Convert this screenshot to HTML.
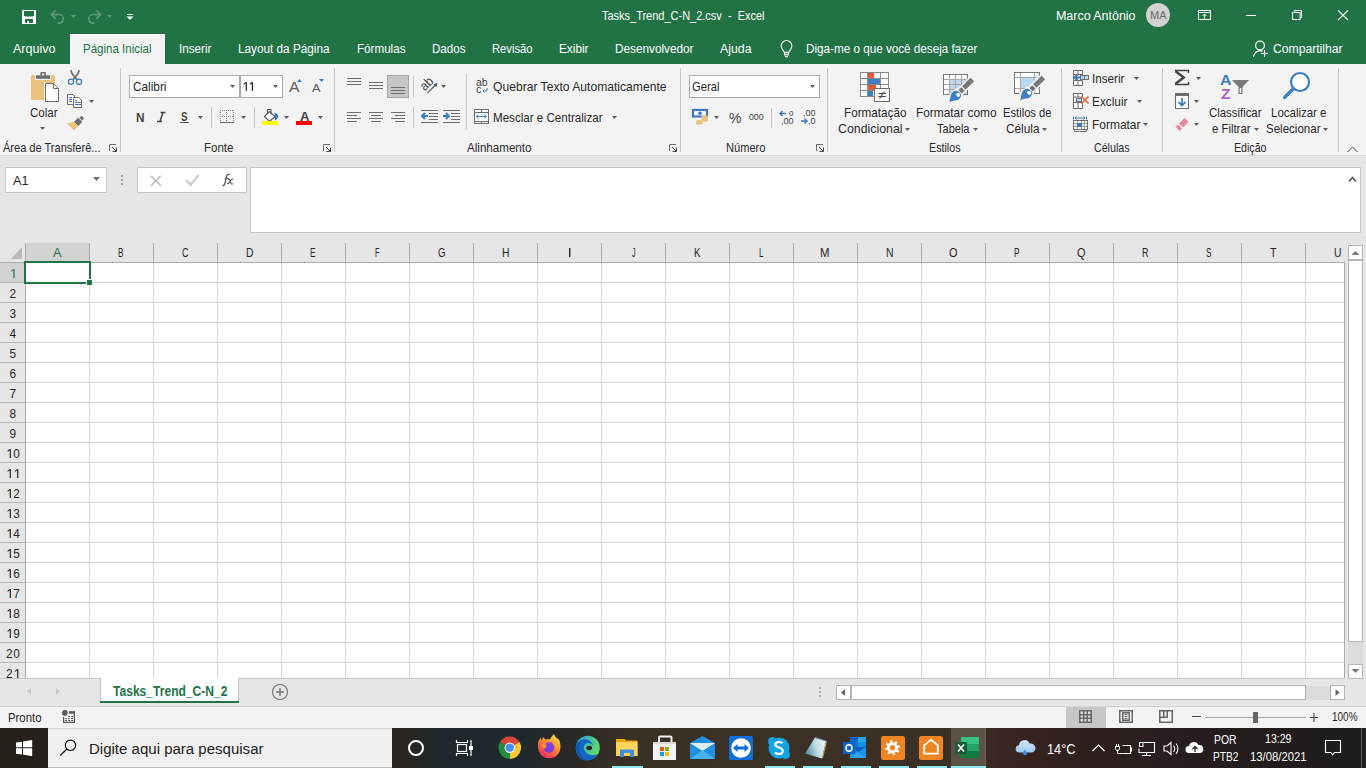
<!DOCTYPE html>
<html><head><meta charset="utf-8"><title>Excel</title>
<style>html,body{margin:0;padding:0;width:1366px;height:768px;overflow:hidden;background:#e6e6e6}
svg{position:absolute;left:0;top:0;display:block}
text{font-family:"Liberation Sans",sans-serif;white-space:pre}</style></head>
<body><svg width="1366" height="768" viewBox="0 0 1366 768">
<rect x="0" y="0" width="1366" height="64" fill="#217346" />
<rect x="0" y="64" width="1366" height="92" fill="#f3f3f3" />
<rect x="0" y="155" width="1366" height="1" fill="#dadada" />
<rect x="0" y="156" width="1366" height="572" fill="#e6e6e6" />
<rect x="22" y="10" width="14" height="14" fill="#fff" />
<path d="M24 11h10v4.6l-1 1h-8l-1-1z" fill="#217346"/>
<rect x="25" y="19" width="8" height="4" fill="#217346" />
<rect x="27" y="21" width="2" height="2" fill="#fff" />
<path d="M51.5 14.5 h7.5 a4.3 4.3 0 0 1 0 8.6 h-1.5" fill="none" stroke="#5f9a78" stroke-width="1.7"/>
<path d="M55.5 10.5 l-4 4 4 4" fill="none" stroke="#5f9a78" stroke-width="1.7"/>
<path d="M71 15h5l-2.5 3z" fill="#5f9a78"/>
<path d="M100.5 14.5 h-7.5 a4.3 4.3 0 0 0 0 8.6 h1.5" fill="none" stroke="#5f9a78" stroke-width="1.7"/>
<path d="M96.5 10.5 l4 4 -4 4" fill="none" stroke="#5f9a78" stroke-width="1.7"/>
<path d="M107 15h5l-2.5 3z" fill="#5f9a78"/>
<rect x="127" y="14" width="6" height="1" fill="#fff" />
<path d="M126.5 16.5h7l-3.5 3.5z" fill="#fff"/>
<text x="602" y="20" font-size="13" fill="#fff" font-weight="normal" textLength="162.5" lengthAdjust="spacingAndGlyphs" font-family="Liberation Sans" >Tasks_Trend_C-N_2.csv  -  Excel</text>
<text x="1056" y="20" font-size="13" fill="#fff" font-weight="normal" textLength="79.5" lengthAdjust="spacingAndGlyphs" font-family="Liberation Sans" >Marco Antônio</text>
<circle cx="1158" cy="15" r="12" fill="#d2d2d2"/>
<text x="1150" y="19" font-size="11" fill="#6b6b6b" font-weight="normal" textLength="16.5" lengthAdjust="spacingAndGlyphs" font-family="Liberation Sans" >MA</text>
<rect x="1198.5" y="10.5" width="12" height="9" fill="none" stroke="#fff" stroke-width="1"/>
<rect x="1199" y="12" width="12" height="1" fill="#fff" />
<path d="M1204.5 19.5v-5.5 M1202.5 16l2-2 2 2" fill="none" stroke="#fff" stroke-width="1"/>
<rect x="1246" y="15" width="10" height="1" fill="#fff" />
<rect x="1292.5" y="12.5" width="7.5" height="7" fill="none" stroke="#fff"/>
<path d="M1294.5 12v-1.5h7v7h-1.5" fill="none" stroke="#fff"/>
<path d="M1338 10.3l10 9.7 M1348 10.3l-10 9.7" stroke="#fff" stroke-width="1.1"/>
<rect x="69" y="33" width="97" height="31" fill="#1d6b40" />
<rect x="70" y="34" width="95" height="30" fill="#ffffff" />
<rect x="71" y="35" width="93" height="29" fill="#f3f3f3" />
<text x="13" y="53" font-size="13" fill="#fff" font-weight="normal" textLength="42.5" lengthAdjust="spacingAndGlyphs" font-family="Liberation Sans" >Arquivo</text>
<text x="83" y="53" font-size="13" fill="#217346" font-weight="normal" textLength="68.5" lengthAdjust="spacingAndGlyphs" font-family="Liberation Sans" >Página Inicial</text>
<text x="179" y="53" font-size="13" fill="#fff" font-weight="normal" textLength="32.5" lengthAdjust="spacingAndGlyphs" font-family="Liberation Sans" >Inserir</text>
<text x="238" y="53" font-size="13" fill="#fff" font-weight="normal" textLength="91.5" lengthAdjust="spacingAndGlyphs" font-family="Liberation Sans" >Layout da Página</text>
<text x="357" y="53" font-size="13" fill="#fff" font-weight="normal" textLength="48.5" lengthAdjust="spacingAndGlyphs" font-family="Liberation Sans" >Fórmulas</text>
<text x="432" y="53" font-size="13" fill="#fff" font-weight="normal" textLength="33.5" lengthAdjust="spacingAndGlyphs" font-family="Liberation Sans" >Dados</text>
<text x="492" y="53" font-size="13" fill="#fff" font-weight="normal" textLength="40.5" lengthAdjust="spacingAndGlyphs" font-family="Liberation Sans" >Revisão</text>
<text x="559" y="53" font-size="13" fill="#fff" font-weight="normal" textLength="29.5" lengthAdjust="spacingAndGlyphs" font-family="Liberation Sans" >Exibir</text>
<text x="615" y="53" font-size="13" fill="#fff" font-weight="normal" textLength="78.5" lengthAdjust="spacingAndGlyphs" font-family="Liberation Sans" >Desenvolvedor</text>
<text x="720" y="53" font-size="13" fill="#fff" font-weight="normal" textLength="31.5" lengthAdjust="spacingAndGlyphs" font-family="Liberation Sans" >Ajuda</text>
<path d="M784.3 52.3L782.2 49A5.3 5.3 0 1 1 790.8 49L788.7 52.3z" fill="none" stroke="#fff" stroke-width="1.2"/>
<rect x="784.6" y="52.6" width="3.9" height="2.2" fill="none" stroke="#fff" stroke-width="1.2"/>
<rect x="785" y="56" width="3" height="1.2" fill="#fff" />
<text x="806" y="53" font-size="13" fill="#fff" font-weight="normal" textLength="171.5" lengthAdjust="spacingAndGlyphs" font-family="Liberation Sans" >Diga-me o que você deseja fazer</text>
<circle cx="1260" cy="45.5" r="4.4" fill="none" stroke="#fff" stroke-width="1.2"/>
<path d="M1253.5 57 C1253.8 53.5 1256.5 50.6 1260 50.6 C1261 50.6 1262 50.8 1262.5 51.2" fill="none" stroke="#fff" stroke-width="1.2"/>
<path d="M1264.5 50v7 M1261 53.5h7" stroke="#fff" stroke-width="1.1"/>
<text x="1273" y="53" font-size="13" fill="#fff" font-weight="normal" textLength="69.5" lengthAdjust="spacingAndGlyphs" font-family="Liberation Sans" >Compartilhar</text>
<rect x="120" y="68" width="1" height="84" fill="#c8c8c8" />
<rect x="334" y="68" width="1" height="84" fill="#c8c8c8" />
<rect x="680" y="68" width="1" height="84" fill="#c8c8c8" />
<rect x="827" y="68" width="1" height="84" fill="#c8c8c8" />
<rect x="1061" y="68" width="1" height="84" fill="#c8c8c8" />
<rect x="1162" y="68" width="1" height="84" fill="#c8c8c8" />
<rect x="1338" y="68" width="1" height="84" fill="#c8c8c8" />
<text x="3" y="152" font-size="12.2" fill="#2a2a2a" font-weight="normal" textLength="97.5" lengthAdjust="spacingAndGlyphs" font-family="Liberation Sans" >Área de Transferê...</text>
<text x="204" y="152" font-size="12.2" fill="#2a2a2a" font-weight="normal" textLength="29.5" lengthAdjust="spacingAndGlyphs" font-family="Liberation Sans" >Fonte</text>
<text x="467" y="152" font-size="12.2" fill="#2a2a2a" font-weight="normal" textLength="64.5" lengthAdjust="spacingAndGlyphs" font-family="Liberation Sans" >Alinhamento</text>
<text x="726" y="152" font-size="12.2" fill="#2a2a2a" font-weight="normal" textLength="39.5" lengthAdjust="spacingAndGlyphs" font-family="Liberation Sans" >Número</text>
<text x="929" y="152" font-size="12.2" fill="#2a2a2a" font-weight="normal" textLength="31.5" lengthAdjust="spacingAndGlyphs" font-family="Liberation Sans" >Estilos</text>
<text x="1094" y="152" font-size="12.2" fill="#2a2a2a" font-weight="normal" textLength="35.5" lengthAdjust="spacingAndGlyphs" font-family="Liberation Sans" >Células</text>
<text x="1234" y="152" font-size="12.2" fill="#2a2a2a" font-weight="normal" textLength="32.5" lengthAdjust="spacingAndGlyphs" font-family="Liberation Sans" >Edição</text>
<path d="M109.5 151v-6.5h6.5" fill="none" stroke="#6b6b6b" stroke-width="1"/>
<path d="M112 147l4 4 M116.5 147.5v4h-4" fill="none" stroke="#444" stroke-width="1"/>
<path d="M323.5 151v-6.5h6.5" fill="none" stroke="#6b6b6b" stroke-width="1"/>
<path d="M326 147l4 4 M330.5 147.5v4h-4" fill="none" stroke="#444" stroke-width="1"/>
<path d="M669.5 151v-6.5h6.5" fill="none" stroke="#6b6b6b" stroke-width="1"/>
<path d="M672 147l4 4 M676.5 147.5v4h-4" fill="none" stroke="#444" stroke-width="1"/>
<path d="M816.5 151v-6.5h6.5" fill="none" stroke="#6b6b6b" stroke-width="1"/>
<path d="M819 147l4 4 M823.5 147.5v4h-4" fill="none" stroke="#444" stroke-width="1"/>
<path d="M1347.5 152l5-5 5 5" fill="none" stroke="#444" stroke-width="1"/>
<rect x="31" y="75" width="24" height="25" rx="1.5" fill="#eac27c"/>
<rect x="35" y="74" width="16" height="6" fill="#f3f3f3" />
<path d="M36 75.3h14v3.5h-14z" fill="#6d6d6d"/>
<rect x="40.3" y="72" width="5.6" height="4" rx="1" fill="#6d6d6d"/>
<rect x="42" y="73.5" width="2.2" height="2" fill="#f3f3f3" />
<rect x="44" y="82" width="2" height="20" fill="#f3f3f3" />
<path d="M45.5 83.5h8l5 5v13h-13z" fill="#fff" stroke="#6d6d6d" stroke-width="1"/>
<path d="M53.5 83.5v5h5" fill="none" stroke="#6d6d6d" stroke-width="1"/>
<text x="30" y="117" font-size="12.2" fill="#2a2a2a" font-weight="normal" textLength="27.5" lengthAdjust="spacingAndGlyphs" font-family="Liberation Sans" >Colar</text>
<path d="M40 127h5l-2.5 3z" fill="#5b5b5b"/>
<path d="M70.8 70.2C71.5 73.5 73.5 76 76.8 79.6 M79.2 70.2C78.5 73.5 76.5 76 73.2 79.6" fill="none" stroke="#6d6d6d" stroke-width="1.7"/>
<circle cx="71" cy="81.8" r="2.6" fill="none" stroke="#3c78c0" stroke-width="1.2"/>
<circle cx="79" cy="81.8" r="2.6" fill="none" stroke="#3c78c0" stroke-width="1.2"/>
<path d="M67.5 94.5h5.5l1.5 1.5v8.5h-7z" fill="#fff" stroke="#6d6d6d"/>
<path d="M73.5 97.5h5.5l2.5 2.5v7.5h-8z" fill="#fff" stroke="#6d6d6d"/>
<rect x="69" y="97" width="3" height="1" fill="#3c78c0" />
<rect x="69" y="99" width="3" height="1" fill="#3c78c0" />
<rect x="69" y="101" width="3" height="1" fill="#3c78c0" />
<rect x="75" y="100" width="2" height="1" fill="#3c78c0" />
<rect x="75" y="102" width="6" height="1" fill="#3c78c0" />
<rect x="75" y="104" width="6" height="1" fill="#3c78c0" />
<path d="M89 100h5l-2.5 3z" fill="#5b5b5b"/>
<g transform="translate(82.8 117.2) rotate(135)"><path d="M0 -1.9h2.8v3.8h-2.8z" fill="#6d6d6d"/><path d="M3.6 -2.9h5.9v5.8h-5.9z" fill="#6d6d6d"/><path d="M9.5 -2.9L15.6 -3L15.6 6.6L9.5 2.9z" fill="#eac27c"/></g>
<rect x="129" y="75" width="111" height="23" fill="#ababab" />
<rect x="130" y="76" width="109" height="21" fill="#fff" />
<rect x="240" y="75" width="43" height="23" fill="#ababab" />
<rect x="241" y="76" width="41" height="21" fill="#fff" />
<text x="133" y="91" font-size="13" fill="#262626" font-weight="normal" textLength="33.5" lengthAdjust="spacingAndGlyphs" font-family="Liberation Sans" >Calibri</text>
<path d="M230 85h5l-2.5 3z" fill="#5b5b5b"/>
<path d="M246.30 91V82.3" fill="none" stroke="#262626" stroke-width="1.2"/>
<path d="M246.80 82L245.70 82L243.30 83.9L243.80 84.7L245.70 83.5z" fill="#262626"/>
<path d="M252.40 91V82.3" fill="none" stroke="#262626" stroke-width="1.2"/>
<path d="M252.90 82L251.80 82L249.40 83.9L249.90 84.7L251.80 83.5z" fill="#262626"/>
<path d="M273 85h5l-2.5 3z" fill="#5b5b5b"/>
<text x="289" y="92" font-size="14" fill="#5b5b5b" font-weight="normal" textLength="10.5" lengthAdjust="spacingAndGlyphs" font-family="Liberation Sans" >A</text>
<path d="M297 82l2.5-3 2.5 3z" fill="#3c78c0"/>
<text x="312" y="92" font-size="11.5" fill="#5b5b5b" font-weight="normal" textLength="8.5" lengthAdjust="spacingAndGlyphs" font-family="Liberation Sans" >A</text>
<path d="M319 79h5l-2.5 3z" fill="#3c78c0"/>
<text x="136" y="122" font-size="12.5" fill="#444" font-weight="bold" textLength="8.5" lengthAdjust="spacingAndGlyphs" font-family="Liberation Sans" >N</text>
<path d="M160.5 112.5h5 M157 121.5h5 M163 112.5l-3 9" fill="none" stroke="#444" stroke-width="1.5"/>
<text x="181" y="121" font-size="12.5" fill="#444" font-weight="bold" textLength="6.5" lengthAdjust="spacingAndGlyphs" font-family="Liberation Sans" >S</text>
<rect x="180" y="122" width="9" height="1" fill="#555" />
<path d="M198 116h5l-2.5 3z" fill="#5b5b5b"/>
<rect x="211" y="107" width="1" height="21" fill="#c8c8c8" />
<rect x="220" y="110" width="1" height="1" fill="#888" />
<rect x="220" y="116" width="1" height="1" fill="#888" />
<rect x="220" y="110" width="1" height="1" fill="#888" />
<rect x="233" y="110" width="1" height="1" fill="#888" />
<rect x="226" y="110" width="1" height="1" fill="#888" />
<rect x="222" y="110" width="1" height="1" fill="#888" />
<rect x="222" y="116" width="1" height="1" fill="#888" />
<rect x="220" y="112" width="1" height="1" fill="#888" />
<rect x="233" y="112" width="1" height="1" fill="#888" />
<rect x="226" y="112" width="1" height="1" fill="#888" />
<rect x="224" y="110" width="1" height="1" fill="#888" />
<rect x="224" y="116" width="1" height="1" fill="#888" />
<rect x="220" y="114" width="1" height="1" fill="#888" />
<rect x="233" y="114" width="1" height="1" fill="#888" />
<rect x="226" y="114" width="1" height="1" fill="#888" />
<rect x="226" y="110" width="1" height="1" fill="#888" />
<rect x="226" y="116" width="1" height="1" fill="#888" />
<rect x="220" y="116" width="1" height="1" fill="#888" />
<rect x="233" y="116" width="1" height="1" fill="#888" />
<rect x="226" y="116" width="1" height="1" fill="#888" />
<rect x="228" y="110" width="1" height="1" fill="#888" />
<rect x="228" y="116" width="1" height="1" fill="#888" />
<rect x="220" y="118" width="1" height="1" fill="#888" />
<rect x="233" y="118" width="1" height="1" fill="#888" />
<rect x="226" y="118" width="1" height="1" fill="#888" />
<rect x="230" y="110" width="1" height="1" fill="#888" />
<rect x="230" y="116" width="1" height="1" fill="#888" />
<rect x="220" y="120" width="1" height="1" fill="#888" />
<rect x="233" y="120" width="1" height="1" fill="#888" />
<rect x="226" y="120" width="1" height="1" fill="#888" />
<rect x="232" y="110" width="1" height="1" fill="#888" />
<rect x="232" y="116" width="1" height="1" fill="#888" />
<rect x="220" y="122" width="1" height="1" fill="#888" />
<rect x="233" y="122" width="1" height="1" fill="#888" />
<rect x="226" y="122" width="1" height="1" fill="#888" />
<rect x="220" y="122" width="14" height="1" fill="#6d6d6d" />
<path d="M241 116h5l-2.5 3z" fill="#5b5b5b"/>
<rect x="254" y="107" width="1" height="21" fill="#c8c8c8" />
<path d="M264.5 116.5L269.5 111.5L275 116.5L269.5 121.5Z" fill="#fff" stroke="#555" stroke-width="1.1"/>
<path d="M267.5 113V109.5H271V114.5" fill="none" stroke="#555" stroke-width="1.1"/>
<path d="M274.5 112.5C277 113 278.5 115 278 117C277.5 118.5 276.5 120 275 120.5Z" fill="#3c78c0"/>
<rect x="262" y="121" width="16" height="4" fill="#ffff00" />
<path d="M284 116h5l-2.5 3z" fill="#5b5b5b"/>
<text x="300" y="121" font-size="12.5" fill="#444" font-weight="bold" textLength="9.5" lengthAdjust="spacingAndGlyphs" font-family="Liberation Sans" >A</text>
<rect x="296" y="121" width="16" height="4" fill="#ff0000" />
<path d="M318 116h5l-2.5 3z" fill="#5b5b5b"/>
<rect x="347" y="78" width="14" height="1" fill="#6d6d6d" />
<rect x="347" y="81" width="14" height="1" fill="#6d6d6d" />
<rect x="347" y="84" width="14" height="1" fill="#6d6d6d" />
<rect x="369" y="82" width="14" height="1" fill="#6d6d6d" />
<rect x="369" y="85" width="14" height="1" fill="#6d6d6d" />
<rect x="369" y="88" width="14" height="1" fill="#6d6d6d" />
<rect x="387" y="75" width="22" height="23" fill="#a8a8a8" />
<rect x="388" y="76" width="20" height="21" fill="#c6c6c6" />
<rect x="391" y="87" width="14" height="1" fill="#6d6d6d" />
<rect x="391" y="90" width="14" height="1" fill="#6d6d6d" />
<rect x="391" y="93" width="14" height="1" fill="#6d6d6d" />
<rect x="413" y="76" width="1" height="21" fill="#c8c8c8" />
<text x="0" y="0" font-size="13" fill="#444" textLength="13.5" lengthAdjust="spacingAndGlyphs" font-family="Liberation Sans" transform="translate(424.7 91.5) rotate(-45)">ab</text>
<path d="M427.5 92.8l9-8.8" fill="none" stroke="#555" stroke-width="1.1"/><path d="M437.5 83l-4.2 1.2 3 3z" fill="#555"/>
<path d="M441 85h5l-2.5 3z" fill="#5b5b5b"/>
<rect x="347" y="112" width="14" height="1" fill="#6d6d6d" />
<rect x="369" y="112" width="14" height="1" fill="#6d6d6d" />
<rect x="391" y="112" width="14" height="1" fill="#6d6d6d" />
<rect x="347" y="115" width="10" height="1" fill="#6d6d6d" />
<rect x="371" y="115" width="10" height="1" fill="#6d6d6d" />
<rect x="395" y="115" width="10" height="1" fill="#6d6d6d" />
<rect x="347" y="118" width="14" height="1" fill="#6d6d6d" />
<rect x="369" y="118" width="14" height="1" fill="#6d6d6d" />
<rect x="391" y="118" width="14" height="1" fill="#6d6d6d" />
<rect x="347" y="121" width="10" height="1" fill="#6d6d6d" />
<rect x="371" y="121" width="10" height="1" fill="#6d6d6d" />
<rect x="395" y="121" width="10" height="1" fill="#6d6d6d" />
<rect x="413" y="107" width="1" height="21" fill="#c8c8c8" />
<rect x="421" y="110" width="17" height="1" fill="#6d6d6d" />
<rect x="443" y="110" width="17" height="1" fill="#6d6d6d" />
<rect x="429" y="113" width="9" height="1" fill="#6d6d6d" />
<rect x="451" y="113" width="9" height="1" fill="#6d6d6d" />
<rect x="429" y="116" width="9" height="1" fill="#6d6d6d" />
<rect x="451" y="116" width="9" height="1" fill="#6d6d6d" />
<rect x="429" y="119" width="9" height="1" fill="#6d6d6d" />
<rect x="451" y="119" width="9" height="1" fill="#6d6d6d" />
<rect x="421" y="122" width="17" height="1" fill="#6d6d6d" />
<rect x="443" y="122" width="17" height="1" fill="#6d6d6d" />
<path d="M422 116h6 M425 113l-3 3 3 3" fill="none" stroke="#3c80c4" stroke-width="2"/>
<path d="M443 116h6 M446 113l3 3-3 3" fill="none" stroke="#3c80c4" stroke-width="2"/>
<rect x="466" y="74" width="1" height="55" fill="#c8c8c8" />
<text x="476" y="86" font-size="10.5" fill="#444" font-weight="normal" textLength="11.5" lengthAdjust="spacingAndGlyphs" font-family="Liberation Sans" >ab</text>
<text x="476" y="93" font-size="10.5" fill="#444" font-weight="normal" textLength="5.5" lengthAdjust="spacingAndGlyphs" font-family="Liberation Sans" >c</text>
<path d="M487 88v3h-4 M484.5 89.5l-1.5 1.5 1.5 1.5" fill="none" stroke="#3c80c4" stroke-width="1"/>
<text x="493" y="91" font-size="12.2" fill="#2a2a2a" font-weight="normal" textLength="173.5" lengthAdjust="spacingAndGlyphs" font-family="Liberation Sans" >Quebrar Texto Automaticamente</text>
<rect x="474.5" y="109.5" width="14" height="14" fill="#fff" stroke="#6d6d6d"/>
<rect x="475" y="112" width="14" height="1" fill="#6d6d6d" />
<rect x="475" y="121" width="14" height="1" fill="#6d6d6d" />
<rect x="481" y="110" width="1" height="3" fill="#6d6d6d" />
<rect x="481" y="121" width="1" height="3" fill="#6d6d6d" />
<path d="M476.5 116.5h10 M478.5 114.5l-2 2 2 2 M484.5 114.5l2 2-2 2" fill="none" stroke="#3c80c4" stroke-width="1"/>
<text x="493" y="122" font-size="12.2" fill="#2a2a2a" font-weight="normal" textLength="109.5" lengthAdjust="spacingAndGlyphs" font-family="Liberation Sans" >Mesclar e Centralizar</text>
<path d="M612 116h5l-2.5 3z" fill="#5b5b5b"/>
<rect x="689" y="75" width="131" height="23" fill="#ababab" />
<rect x="690" y="76" width="129" height="21" fill="#fff" />
<text x="692" y="91" font-size="13" fill="#262626" font-weight="normal" textLength="27.5" lengthAdjust="spacingAndGlyphs" font-family="Liberation Sans" >Geral</text>
<path d="M810 85h5l-2.5 3z" fill="#5b5b5b"/>
<rect x="693" y="110" width="14" height="6.5" fill="#fff" stroke="#3c78c0" stroke-width="2.2"/>
<circle cx="700" cy="113.2" r="1.8" fill="#3c78c0"/>
<ellipse cx="704.5" cy="116.5" rx="3.6" ry="1.3" fill="#eac27c"/>
<ellipse cx="704.5" cy="118.5" rx="3.6" ry="1.3" fill="#eac27c"/>
<ellipse cx="704.5" cy="120.5" rx="3.6" ry="1.3" fill="#eac27c"/>
<ellipse cx="699.3" cy="121.2" rx="3.4" ry="1.3" fill="#eac27c"/>
<ellipse cx="699.3" cy="123.2" rx="3.4" ry="1.3" fill="#eac27c"/>
<path d="M714 116h5l-2.5 3z" fill="#5b5b5b"/>
<text x="729" y="123" font-size="14.5" fill="#444" font-weight="normal" textLength="12.5" lengthAdjust="spacingAndGlyphs" font-family="Liberation Sans" >%</text>
<text x="749" y="120" font-size="9.8" fill="#444" font-weight="normal" textLength="14.5" lengthAdjust="spacingAndGlyphs" font-family="Liberation Sans" >000</text>
<rect x="771" y="108" width="1" height="20" fill="#c8c8c8" />
<text x="789" y="116" font-size="8" fill="#444" font-weight="normal" textLength="4.5" lengthAdjust="spacingAndGlyphs" font-family="Liberation Sans" >0</text>
<text x="781" y="124" font-size="8.5" fill="#444" font-weight="normal" textLength="12.5" lengthAdjust="spacingAndGlyphs" font-family="Liberation Sans" >,00</text>
<path d="M786 113.5h-6 M782.5 111l-2.5 2.5 2.5 2.5" fill="none" stroke="#3c78c0" stroke-width="1.4"/>
<text x="803" y="116" font-size="8.5" fill="#444" font-weight="normal" textLength="12.5" lengthAdjust="spacingAndGlyphs" font-family="Liberation Sans" >,00</text>
<text x="808" y="124" font-size="8.5" fill="#444" font-weight="normal" textLength="7.5" lengthAdjust="spacingAndGlyphs" font-family="Liberation Sans" >,0</text>
<path d="M801 121h6 M804.5 118.5l2.5 2.5-2.5 2.5" fill="none" stroke="#3c78c0" stroke-width="1.4"/>
<rect x="860.5" y="72.5" width="28" height="24" fill="#fff" stroke="#8a8a8a"/>
<path d="M861 78.5h27" stroke="#8a8a8a"/>
<path d="M861 84.5h27" stroke="#8a8a8a"/>
<path d="M861 90.5h27" stroke="#8a8a8a"/>
<path d="M867.5 73v23" stroke="#8a8a8a"/>
<path d="M880.5 73v23" stroke="#8a8a8a"/>
<rect x="868" y="73" width="6" height="5" fill="#e05a3a" />
<rect x="868" y="79" width="12" height="5" fill="#3c80c4" />
<rect x="868" y="85" width="8" height="5" fill="#e05a3a" />
<rect x="868" y="91" width="5" height="5" fill="#3c80c4" />
<rect x="874.5" y="88.5" width="15" height="13" fill="#fff" stroke="#6d6d6d"/>
<text x="878" y="99" font-size="12" fill="#444" font-weight="normal" textLength="8.5" lengthAdjust="spacingAndGlyphs" font-family="Liberation Sans" >≠</text>
<text x="844" y="117" font-size="12.2" fill="#2a2a2a" font-weight="normal" textLength="62.5" lengthAdjust="spacingAndGlyphs" font-family="Liberation Sans" >Formatação</text>
<text x="838" y="133" font-size="12.2" fill="#2a2a2a" font-weight="normal" textLength="64.5" lengthAdjust="spacingAndGlyphs" font-family="Liberation Sans" >Condicional</text>
<path d="M905 128h5l-2.5 3z" fill="#5b5b5b"/>
<rect x="943.5" y="74.5" width="24" height="20" fill="#fff" stroke="#777"/>
<rect x="949" y="79" width="18" height="15" fill="#bdd7ee" />
<path d="M944 79.5h23" stroke="#a6a6a6"/>
<path d="M944 84.5h23" stroke="#a6a6a6"/>
<path d="M944 89.5h23" stroke="#a6a6a6"/>
<path d="M949.5 75v19" stroke="#a6a6a6"/>
<path d="M955.5 75v19" stroke="#a6a6a6"/>
<path d="M961.5 75v19" stroke="#a6a6a6"/>
<g transform="translate(972.3 79.5) rotate(135)"><path d="M-1 -4L18.5 -4L18.5 4L-1 4z" fill="#f3f3f3"/><path d="M0 -2.6L12 -2.4L12 2.4L0 2.6z" fill="#777"/><path d="M13.3 -2.4L17.3 -2.4L17.3 2.4L13.3 2.4z" fill="#777"/><path d="M17.8 -5.5L30 -5.5L33 0L30 5.5L17.8 5.5z" fill="#f3f3f3"/><path d="M18.8 -3C20.5 -4.8 24 -4.8 26 -3.5C28 -2 30 -0.5 32.5 0C30 1.5 27.5 3.5 25.5 4.5C22.5 5.5 19.5 4.5 18.5 2C18 0.5 18 -1.5 18.8 -3z" fill="#3f7fc1"/><ellipse cx="20.8" cy="-0.8" rx="1.8" ry="2.2" fill="#fff"/></g>
<text x="916" y="117" font-size="12.2" fill="#2a2a2a" font-weight="normal" textLength="80.5" lengthAdjust="spacingAndGlyphs" font-family="Liberation Sans" >Formatar como</text>
<text x="937" y="133" font-size="12.2" fill="#2a2a2a" font-weight="normal" textLength="32.5" lengthAdjust="spacingAndGlyphs" font-family="Liberation Sans" >Tabela</text>
<path d="M973 128h5l-2.5 3z" fill="#5b5b5b"/>
<rect x="1014.5" y="72.5" width="25" height="21" fill="#fff" stroke="#777"/>
<rect x="1021" y="78" width="13" height="10" fill="#bdd7ee" />
<path d="M1015 77.5h25 M1015 88.5h25 M1020.5 73v20 M1034.5 73v20" stroke="#a6a6a6"/>
<g transform="translate(1043.3 77.5) rotate(135)"><path d="M-1 -4L18.5 -4L18.5 4L-1 4z" fill="#f3f3f3"/><path d="M0 -2.6L12 -2.4L12 2.4L0 2.6z" fill="#777"/><path d="M13.3 -2.4L17.3 -2.4L17.3 2.4L13.3 2.4z" fill="#777"/><path d="M17.8 -5.5L30 -5.5L33 0L30 5.5L17.8 5.5z" fill="#f3f3f3"/><path d="M18.8 -3C20.5 -4.8 24 -4.8 26 -3.5C28 -2 30 -0.5 32.5 0C30 1.5 27.5 3.5 25.5 4.5C22.5 5.5 19.5 4.5 18.5 2C18 0.5 18 -1.5 18.8 -3z" fill="#3f7fc1"/><ellipse cx="20.8" cy="-0.8" rx="1.8" ry="2.2" fill="#fff"/></g>
<text x="1003" y="117" font-size="12.2" fill="#2a2a2a" font-weight="normal" textLength="48.5" lengthAdjust="spacingAndGlyphs" font-family="Liberation Sans" >Estilos de</text>
<text x="1006" y="133" font-size="12.2" fill="#2a2a2a" font-weight="normal" textLength="33.5" lengthAdjust="spacingAndGlyphs" font-family="Liberation Sans" >Célula</text>
<path d="M1042 128h5l-2.5 3z" fill="#5b5b5b"/>
<path d="M1073.5 70.5h9v4h-9z M1078 70.5v4 M1073.5 80.5h9v5h-9z M1078 80.5v5 M1073.5 74.5v6 M1082.5 74.5v1" fill="#fff" stroke="#6d6d6d" stroke-width="1"/>
<rect x="1080.5" y="75.5" width="8" height="4" fill="#bdd7ee" stroke="#6d6d6d"/>
<path d="M1084.5 75.5v4" stroke="#6d6d6d"/>
<path d="M1081 77.5h-6.5 M1077.5 74.5l-3 3 3 3" fill="none" stroke="#3c78c0" stroke-width="1.8"/>
<text x="1092" y="83" font-size="12.2" fill="#2a2a2a" font-weight="normal" textLength="32.5" lengthAdjust="spacingAndGlyphs" font-family="Liberation Sans" >Inserir</text>
<path d="M1134 77h5l-2.5 3z" fill="#5b5b5b"/>
<path d="M1073.5 93.5h9v3.5h-9z M1078 93.5v3.5 M1073.5 102.5h9v6h-9z M1078 102.5v6 M1073.5 97v5.5" fill="#fff" stroke="#6d6d6d" stroke-width="1"/>
<rect x="1076.5" y="98.5" width="5" height="3" fill="#bdd7ee" stroke="#6d6d6d"/>
<path d="M1081.5 96.5l7 7 M1088.5 96.5l-7 7" stroke="#e0643c" stroke-width="1.6"/>
<text x="1092" y="106" font-size="12.2" fill="#2a2a2a" font-weight="normal" textLength="35.5" lengthAdjust="spacingAndGlyphs" font-family="Liberation Sans" >Excluir</text>
<path d="M1137 100h5l-2.5 3z" fill="#5b5b5b"/>
<path d="M1073.5 116.5v3 M1086.5 116.5v3 M1075 118h10 M1076.5 116.5l-1.5 1.5 1.5 1.5 M1083.5 116.5l1.5 1.5-1.5 1.5" fill="none" stroke="#3c78c0" stroke-width="1"/>
<rect x="1073.5" y="120.5" width="14" height="9" fill="#fff" stroke="#6d6d6d"/>
<path d="M1074 123.5h13 M1074 126.5h13 M1077.5 121v8 M1081.5 121v8 M1084.5 121v8" stroke="#999"/>
<rect x="1077" y="123" width="5" height="4" fill="#3c78c0" />
<path d="M1074.5 130v1.5h5 M1080 131.5h6.5v-1.5" fill="none" stroke="#6d6d6d"/>
<text x="1092" y="129" font-size="12.2" fill="#2a2a2a" font-weight="normal" textLength="48.5" lengthAdjust="spacingAndGlyphs" font-family="Liberation Sans" >Formatar</text>
<path d="M1143 123h5l-2.5 3z" fill="#5b5b5b"/>
<path d="M1188.5 73v-2.4h-13.5 M1175 84.4h13.5v-2.4" fill="none" stroke="#444" stroke-width="1.5"/>
<path d="M1175.5 71.2l8.3 6.3-8.3 6.3" fill="none" stroke="#444" stroke-width="2.4" stroke-linejoin="miter"/>
<path d="M1196 77h5l-2.5 3z" fill="#5b5b5b"/>
<rect x="1175.5" y="93.5" width="13" height="15" fill="#fff" stroke="#6d6d6d"/>
<rect x="1175" y="93" width="14" height="3" fill="#6d6d6d" />
<path d="M1182 98v7 M1178.5 102l3.5 3.5 3.5-3.5" fill="none" stroke="#3c80c4" stroke-width="1.8"/>
<path d="M1194 100h5l-2.5 3z" fill="#5b5b5b"/>
<path d="M1179 123.5l5.5-5.5 4 4-5.5 5.5z" fill="#e8879a"/><path d="M1175.5 127l2.5-2.5 4 4-2.5 2.5z" fill="#e8879a"/>
<path d="M1194 123h5l-2.5 3z" fill="#5b5b5b"/>
<text x="1220" y="85" font-size="15" fill="#3c80c4" font-weight="bold" textLength="11.5" lengthAdjust="spacingAndGlyphs" font-family="Liberation Sans" >A</text>
<text x="1221" y="99" font-size="15" fill="#a862c9" font-weight="bold" textLength="9.5" lengthAdjust="spacingAndGlyphs" font-family="Liberation Sans" >Z</text>
<path d="M1232 80h17l-6.5 7v7h-4v-7z" fill="#7a7a7a"/>
<path d="M1240.5 88v5" stroke="#fff" stroke-width="1.5"/>
<text x="1209" y="117" font-size="12.2" fill="#2a2a2a" font-weight="normal" textLength="52.5" lengthAdjust="spacingAndGlyphs" font-family="Liberation Sans" >Classificar</text>
<text x="1212" y="133" font-size="12.2" fill="#2a2a2a" font-weight="normal" textLength="38.5" lengthAdjust="spacingAndGlyphs" font-family="Liberation Sans" >e Filtrar</text>
<path d="M1254 128h5l-2.5 3z" fill="#5b5b5b"/>
<circle cx="1300" cy="82" r="9" fill="#fff" stroke="#3c80c4" stroke-width="2.2"/>
<path d="M1293.5 88.5l-9 9" stroke="#3c80c4" stroke-width="3.2" stroke-linecap="round"/>
<text x="1271" y="117" font-size="12.2" fill="#2a2a2a" font-weight="normal" textLength="55.5" lengthAdjust="spacingAndGlyphs" font-family="Liberation Sans" >Localizar e</text>
<text x="1266" y="133" font-size="12.2" fill="#2a2a2a" font-weight="normal" textLength="54.5" lengthAdjust="spacingAndGlyphs" font-family="Liberation Sans" >Selecionar</text>
<path d="M1323 128h5l-2.5 3z" fill="#5b5b5b"/>
<rect x="5.5" y="167.5" width="101" height="25" fill="#fff" stroke="#c6c6c6"/>
<text x="13" y="185" font-size="12.5" fill="#262626" font-weight="normal" textLength="15.5" lengthAdjust="spacingAndGlyphs" font-family="Liberation Sans" >A1</text>
<path d="M93 177h7l-3.5 4z" fill="#6d6d6d"/>
<rect x="121" y="175" width="2" height="2" fill="#a0a0a0" />
<rect x="121" y="179" width="2" height="2" fill="#a0a0a0" />
<rect x="121" y="183" width="2" height="2" fill="#a0a0a0" />
<rect x="137.5" y="167.5" width="109" height="25" fill="#fff" stroke="#c6c6c6"/>
<path d="M150.8 175.8l10 10 M160.8 175.8l-10 10" stroke="#b9b9b9" stroke-width="1.5"/>
<path d="M186.3 180.3l4.2 4.5 8.3-9.8" fill="none" stroke="#cfcfcf" stroke-width="2.4"/>
<path d="M222.3 185.6C223.8 185.9 224.7 184.6 225.1 182.6L226.6 176.3C227 174.6 228.2 174 229.8 174.4" fill="none" stroke="#555" stroke-width="1.3"/>
<path d="M224.6 178.3h4.2" stroke="#555" stroke-width="1"/>
<path d="M227.8 179.2c1.3-0.6 1.9 0.2 2.3 1.6l0.8 2.4c0.4 1 1.2 1.1 2.2 0.5 M233.2 179.2c-1.2-0.4-1.9 0.3-2.6 1.3l-1.4 2.1c-0.6 0.8-1.3 0.9-2 0.6" fill="none" stroke="#555" stroke-width="1.1"/>
<rect x="250.5" y="167.5" width="1110" height="65" fill="#fff" stroke="#c6c6c6"/>
<path d="M1349 181.5l3.5-4 3.5 4" fill="none" stroke="#555" stroke-width="1.6"/>
<rect x="25" y="263" width="1319" height="415" fill="#ffffff" />
<path d="M22 247v12h-11z" fill="#b9b9b9"/>
<rect x="26" y="243" width="63" height="19" fill="#d2d2d2" />
<rect x="0" y="263" width="25" height="19" fill="#d2d2d2" />
<rect x="89" y="243" width="1" height="19" fill="#ababab" />
<text x="53" y="257" font-size="13" fill="#217346" font-weight="normal" textLength="8.5" lengthAdjust="spacingAndGlyphs" font-family="Liberation Sans" >A</text>
<rect x="153" y="243" width="1" height="19" fill="#ababab" />
<text x="118" y="257" font-size="13" fill="#262626" font-weight="normal" textLength="5.5" lengthAdjust="spacingAndGlyphs" font-family="Liberation Sans" >B</text>
<rect x="217" y="243" width="1" height="19" fill="#ababab" />
<text x="182" y="257" font-size="13" fill="#262626" font-weight="normal" textLength="6.5" lengthAdjust="spacingAndGlyphs" font-family="Liberation Sans" >C</text>
<rect x="281" y="243" width="1" height="19" fill="#ababab" />
<text x="246" y="257" font-size="13" fill="#262626" font-weight="normal" textLength="7.5" lengthAdjust="spacingAndGlyphs" font-family="Liberation Sans" >D</text>
<rect x="345" y="243" width="1" height="19" fill="#ababab" />
<text x="310" y="257" font-size="13" fill="#262626" font-weight="normal" textLength="5.5" lengthAdjust="spacingAndGlyphs" font-family="Liberation Sans" >E</text>
<rect x="409" y="243" width="1" height="19" fill="#ababab" />
<text x="375" y="257" font-size="13" fill="#262626" font-weight="normal" textLength="4.5" lengthAdjust="spacingAndGlyphs" font-family="Liberation Sans" >F</text>
<rect x="473" y="243" width="1" height="19" fill="#ababab" />
<text x="438" y="257" font-size="13" fill="#262626" font-weight="normal" textLength="7.5" lengthAdjust="spacingAndGlyphs" font-family="Liberation Sans" >G</text>
<rect x="537" y="243" width="1" height="19" fill="#ababab" />
<text x="502" y="257" font-size="13" fill="#262626" font-weight="normal" textLength="7.5" lengthAdjust="spacingAndGlyphs" font-family="Liberation Sans" >H</text>
<rect x="601" y="243" width="1" height="19" fill="#ababab" />
<rect x="569" y="248" width="1.4" height="9" fill="#262626" />
<rect x="665" y="243" width="1" height="19" fill="#ababab" />
<text x="632" y="257" font-size="13" fill="#262626" font-weight="normal" textLength="3.5" lengthAdjust="spacingAndGlyphs" font-family="Liberation Sans" >J</text>
<rect x="729" y="243" width="1" height="19" fill="#ababab" />
<text x="694" y="257" font-size="13" fill="#262626" font-weight="normal" textLength="6.5" lengthAdjust="spacingAndGlyphs" font-family="Liberation Sans" >K</text>
<rect x="793" y="243" width="1" height="19" fill="#ababab" />
<text x="759" y="257" font-size="13" fill="#262626" font-weight="normal" textLength="4.5" lengthAdjust="spacingAndGlyphs" font-family="Liberation Sans" >L</text>
<rect x="857" y="243" width="1" height="19" fill="#ababab" />
<text x="820" y="257" font-size="13" fill="#262626" font-weight="normal" textLength="9.5" lengthAdjust="spacingAndGlyphs" font-family="Liberation Sans" >M</text>
<rect x="921" y="243" width="1" height="19" fill="#ababab" />
<text x="886" y="257" font-size="13" fill="#262626" font-weight="normal" textLength="7.5" lengthAdjust="spacingAndGlyphs" font-family="Liberation Sans" >N</text>
<rect x="985" y="243" width="1" height="19" fill="#ababab" />
<text x="949" y="257" font-size="13" fill="#262626" font-weight="normal" textLength="8.5" lengthAdjust="spacingAndGlyphs" font-family="Liberation Sans" >O</text>
<rect x="1049" y="243" width="1" height="19" fill="#ababab" />
<text x="1014" y="257" font-size="13" fill="#262626" font-weight="normal" textLength="5.5" lengthAdjust="spacingAndGlyphs" font-family="Liberation Sans" >P</text>
<rect x="1113" y="243" width="1" height="19" fill="#ababab" />
<text x="1077" y="257" font-size="13" fill="#262626" font-weight="normal" textLength="8.5" lengthAdjust="spacingAndGlyphs" font-family="Liberation Sans" >Q</text>
<rect x="1177" y="243" width="1" height="19" fill="#ababab" />
<text x="1142" y="257" font-size="13" fill="#262626" font-weight="normal" textLength="6.5" lengthAdjust="spacingAndGlyphs" font-family="Liberation Sans" >R</text>
<rect x="1241" y="243" width="1" height="19" fill="#ababab" />
<text x="1206" y="257" font-size="13" fill="#262626" font-weight="normal" textLength="5.5" lengthAdjust="spacingAndGlyphs" font-family="Liberation Sans" >S</text>
<rect x="1305" y="243" width="1" height="19" fill="#ababab" />
<text x="1270" y="257" font-size="13" fill="#262626" font-weight="normal" textLength="6.5" lengthAdjust="spacingAndGlyphs" font-family="Liberation Sans" >T</text>
<text x="1334" y="257" font-size="13" fill="#262626" font-weight="normal" textLength="7.5" lengthAdjust="spacingAndGlyphs" font-family="Liberation Sans" >U</text>
<rect x="0" y="262" width="1345" height="1" fill="#ababab" />
<rect x="25" y="243" width="1" height="436" fill="#ababab" />
<rect x="26" y="282" width="1318" height="1" fill="#d4d4d4" />
<rect x="0" y="282" width="25" height="1" fill="#b4b4b4" />
<rect x="26" y="302" width="1318" height="1" fill="#d4d4d4" />
<rect x="0" y="302" width="25" height="1" fill="#b4b4b4" />
<rect x="26" y="322" width="1318" height="1" fill="#d4d4d4" />
<rect x="0" y="322" width="25" height="1" fill="#b4b4b4" />
<rect x="26" y="342" width="1318" height="1" fill="#d4d4d4" />
<rect x="0" y="342" width="25" height="1" fill="#b4b4b4" />
<rect x="26" y="362" width="1318" height="1" fill="#d4d4d4" />
<rect x="0" y="362" width="25" height="1" fill="#b4b4b4" />
<rect x="26" y="382" width="1318" height="1" fill="#d4d4d4" />
<rect x="0" y="382" width="25" height="1" fill="#b4b4b4" />
<rect x="26" y="402" width="1318" height="1" fill="#d4d4d4" />
<rect x="0" y="402" width="25" height="1" fill="#b4b4b4" />
<rect x="26" y="422" width="1318" height="1" fill="#d4d4d4" />
<rect x="0" y="422" width="25" height="1" fill="#b4b4b4" />
<rect x="26" y="442" width="1318" height="1" fill="#d4d4d4" />
<rect x="0" y="442" width="25" height="1" fill="#b4b4b4" />
<rect x="26" y="462" width="1318" height="1" fill="#d4d4d4" />
<rect x="0" y="462" width="25" height="1" fill="#b4b4b4" />
<rect x="26" y="482" width="1318" height="1" fill="#d4d4d4" />
<rect x="0" y="482" width="25" height="1" fill="#b4b4b4" />
<rect x="26" y="502" width="1318" height="1" fill="#d4d4d4" />
<rect x="0" y="502" width="25" height="1" fill="#b4b4b4" />
<rect x="26" y="522" width="1318" height="1" fill="#d4d4d4" />
<rect x="0" y="522" width="25" height="1" fill="#b4b4b4" />
<rect x="26" y="542" width="1318" height="1" fill="#d4d4d4" />
<rect x="0" y="542" width="25" height="1" fill="#b4b4b4" />
<rect x="26" y="562" width="1318" height="1" fill="#d4d4d4" />
<rect x="0" y="562" width="25" height="1" fill="#b4b4b4" />
<rect x="26" y="582" width="1318" height="1" fill="#d4d4d4" />
<rect x="0" y="582" width="25" height="1" fill="#b4b4b4" />
<rect x="26" y="602" width="1318" height="1" fill="#d4d4d4" />
<rect x="0" y="602" width="25" height="1" fill="#b4b4b4" />
<rect x="26" y="622" width="1318" height="1" fill="#d4d4d4" />
<rect x="0" y="622" width="25" height="1" fill="#b4b4b4" />
<rect x="26" y="642" width="1318" height="1" fill="#d4d4d4" />
<rect x="0" y="642" width="25" height="1" fill="#b4b4b4" />
<rect x="26" y="662" width="1318" height="1" fill="#d4d4d4" />
<rect x="0" y="662" width="25" height="1" fill="#b4b4b4" />
<rect x="89" y="263" width="1" height="415" fill="#d4d4d4" />
<rect x="153" y="263" width="1" height="415" fill="#d4d4d4" />
<rect x="217" y="263" width="1" height="415" fill="#d4d4d4" />
<rect x="281" y="263" width="1" height="415" fill="#d4d4d4" />
<rect x="345" y="263" width="1" height="415" fill="#d4d4d4" />
<rect x="409" y="263" width="1" height="415" fill="#d4d4d4" />
<rect x="473" y="263" width="1" height="415" fill="#d4d4d4" />
<rect x="537" y="263" width="1" height="415" fill="#d4d4d4" />
<rect x="601" y="263" width="1" height="415" fill="#d4d4d4" />
<rect x="665" y="263" width="1" height="415" fill="#d4d4d4" />
<rect x="729" y="263" width="1" height="415" fill="#d4d4d4" />
<rect x="793" y="263" width="1" height="415" fill="#d4d4d4" />
<rect x="857" y="263" width="1" height="415" fill="#d4d4d4" />
<rect x="921" y="263" width="1" height="415" fill="#d4d4d4" />
<rect x="985" y="263" width="1" height="415" fill="#d4d4d4" />
<rect x="1049" y="263" width="1" height="415" fill="#d4d4d4" />
<rect x="1113" y="263" width="1" height="415" fill="#d4d4d4" />
<rect x="1177" y="263" width="1" height="415" fill="#d4d4d4" />
<rect x="1241" y="263" width="1" height="415" fill="#d4d4d4" />
<rect x="1305" y="263" width="1" height="415" fill="#d4d4d4" />
<path d="M14.00 278V269.3" fill="none" stroke="#217346" stroke-width="1.2"/>
<path d="M14.50 269L13.40 269L11.00 270.9L11.50 271.7L13.40 270.5z" fill="#217346"/>
<text x="9.60" y="298" font-size="13" fill="#262626" textLength="6.6" lengthAdjust="spacingAndGlyphs" font-family="Liberation Sans">2</text>
<text x="9.60" y="318" font-size="13" fill="#262626" textLength="6.6" lengthAdjust="spacingAndGlyphs" font-family="Liberation Sans">3</text>
<text x="9.60" y="338" font-size="13" fill="#262626" textLength="6.6" lengthAdjust="spacingAndGlyphs" font-family="Liberation Sans">4</text>
<text x="9.60" y="358" font-size="13" fill="#262626" textLength="6.6" lengthAdjust="spacingAndGlyphs" font-family="Liberation Sans">5</text>
<text x="9.60" y="378" font-size="13" fill="#262626" textLength="6.6" lengthAdjust="spacingAndGlyphs" font-family="Liberation Sans">6</text>
<text x="9.60" y="398" font-size="13" fill="#262626" textLength="6.6" lengthAdjust="spacingAndGlyphs" font-family="Liberation Sans">7</text>
<text x="9.60" y="418" font-size="13" fill="#262626" textLength="6.6" lengthAdjust="spacingAndGlyphs" font-family="Liberation Sans">8</text>
<text x="9.60" y="438" font-size="13" fill="#262626" textLength="6.6" lengthAdjust="spacingAndGlyphs" font-family="Liberation Sans">9</text>
<path d="M10.30 458V449.3" fill="none" stroke="#262626" stroke-width="1.2"/>
<path d="M10.80 449L9.70 449L7.30 450.9L7.80 451.7L9.70 450.5z" fill="#262626"/>
<text x="13.30" y="458" font-size="13" fill="#262626" textLength="6.6" lengthAdjust="spacingAndGlyphs" font-family="Liberation Sans">0</text>
<path d="M10.30 478V469.3" fill="none" stroke="#262626" stroke-width="1.2"/>
<path d="M10.80 469L9.70 469L7.30 470.9L7.80 471.7L9.70 470.5z" fill="#262626"/>
<path d="M17.70 478V469.3" fill="none" stroke="#262626" stroke-width="1.2"/>
<path d="M18.20 469L17.10 469L14.70 470.9L15.20 471.7L17.10 470.5z" fill="#262626"/>
<path d="M10.30 498V489.3" fill="none" stroke="#262626" stroke-width="1.2"/>
<path d="M10.80 489L9.70 489L7.30 490.9L7.80 491.7L9.70 490.5z" fill="#262626"/>
<text x="13.30" y="498" font-size="13" fill="#262626" textLength="6.6" lengthAdjust="spacingAndGlyphs" font-family="Liberation Sans">2</text>
<path d="M10.30 518V509.3" fill="none" stroke="#262626" stroke-width="1.2"/>
<path d="M10.80 509L9.70 509L7.30 510.9L7.80 511.7L9.70 510.5z" fill="#262626"/>
<text x="13.30" y="518" font-size="13" fill="#262626" textLength="6.6" lengthAdjust="spacingAndGlyphs" font-family="Liberation Sans">3</text>
<path d="M10.30 538V529.3" fill="none" stroke="#262626" stroke-width="1.2"/>
<path d="M10.80 529L9.70 529L7.30 530.9L7.80 531.7L9.70 530.5z" fill="#262626"/>
<text x="13.30" y="538" font-size="13" fill="#262626" textLength="6.6" lengthAdjust="spacingAndGlyphs" font-family="Liberation Sans">4</text>
<path d="M10.30 558V549.3" fill="none" stroke="#262626" stroke-width="1.2"/>
<path d="M10.80 549L9.70 549L7.30 550.9L7.80 551.7L9.70 550.5z" fill="#262626"/>
<text x="13.30" y="558" font-size="13" fill="#262626" textLength="6.6" lengthAdjust="spacingAndGlyphs" font-family="Liberation Sans">5</text>
<path d="M10.30 578V569.3" fill="none" stroke="#262626" stroke-width="1.2"/>
<path d="M10.80 569L9.70 569L7.30 570.9L7.80 571.7L9.70 570.5z" fill="#262626"/>
<text x="13.30" y="578" font-size="13" fill="#262626" textLength="6.6" lengthAdjust="spacingAndGlyphs" font-family="Liberation Sans">6</text>
<path d="M10.30 598V589.3" fill="none" stroke="#262626" stroke-width="1.2"/>
<path d="M10.80 589L9.70 589L7.30 590.9L7.80 591.7L9.70 590.5z" fill="#262626"/>
<text x="13.30" y="598" font-size="13" fill="#262626" textLength="6.6" lengthAdjust="spacingAndGlyphs" font-family="Liberation Sans">7</text>
<path d="M10.30 618V609.3" fill="none" stroke="#262626" stroke-width="1.2"/>
<path d="M10.80 609L9.70 609L7.30 610.9L7.80 611.7L9.70 610.5z" fill="#262626"/>
<text x="13.30" y="618" font-size="13" fill="#262626" textLength="6.6" lengthAdjust="spacingAndGlyphs" font-family="Liberation Sans">8</text>
<path d="M10.30 638V629.3" fill="none" stroke="#262626" stroke-width="1.2"/>
<path d="M10.80 629L9.70 629L7.30 630.9L7.80 631.7L9.70 630.5z" fill="#262626"/>
<text x="13.30" y="638" font-size="13" fill="#262626" textLength="6.6" lengthAdjust="spacingAndGlyphs" font-family="Liberation Sans">9</text>
<text x="5.90" y="658" font-size="13" fill="#262626" textLength="6.6" lengthAdjust="spacingAndGlyphs" font-family="Liberation Sans">2</text>
<text x="13.30" y="658" font-size="13" fill="#262626" textLength="6.6" lengthAdjust="spacingAndGlyphs" font-family="Liberation Sans">0</text>
<text x="5.90" y="678" font-size="13" fill="#262626" textLength="6.6" lengthAdjust="spacingAndGlyphs" font-family="Liberation Sans">2</text>
<path d="M17.70 678V669.3" fill="none" stroke="#262626" stroke-width="1.2"/>
<path d="M18.20 669L17.10 669L14.70 670.9L15.20 671.7L17.10 670.5z" fill="#262626"/>
<rect x="1344" y="262" width="1" height="417" fill="#ababab" />
<rect x="24" y="261" width="67" height="2" fill="#217346" />
<rect x="24" y="261" width="2" height="23" fill="#217346" />
<rect x="89" y="261" width="2" height="18" fill="#217346" />
<rect x="24" y="282" width="62" height="2" fill="#217346" />
<rect x="86" y="279" width="6" height="6" fill="#fff" />
<rect x="87" y="280" width="5" height="5" fill="#217346" />
<rect x="1345" y="243" width="21" height="436" fill="#e6e6e6" />
<rect x="1348.5" y="245.5" width="14" height="14" fill="#fff" stroke="#b4b4b4"/>
<path d="M1351.5 255h8l-4-4z" fill="#777"/>
<rect x="1348" y="260" width="15" height="404" fill="#dcdcdc" />
<rect x="1348.5" y="260.5" width="14" height="381" fill="#fff" stroke="#b4b4b4"/>
<rect x="1348.5" y="664.5" width="14" height="14" fill="#fff" stroke="#b4b4b4"/>
<path d="M1351.5 669h8l-4 4z" fill="#777"/>
<rect x="0" y="678" width="1345" height="1" fill="#c6c6c6" />
<path d="M31 688v7l-4-3.5z" fill="#c6c6c6"/>
<path d="M56 688v7l4-3.5z" fill="#c6c6c6"/>
<rect x="100" y="678" width="139" height="25" fill="#c6c6c6" />
<rect x="101" y="678" width="137" height="24" fill="#fff" />
<rect x="100" y="701" width="139" height="2" fill="#217346" />
<text x="113" y="696" font-size="14" fill="#217346" font-weight="bold" textLength="114.5" lengthAdjust="spacingAndGlyphs" font-family="Liberation Sans" >Tasks_Trend_C-N_2</text>
<circle cx="280" cy="692" r="7.5" fill="none" stroke="#777" stroke-width="1.2"/>
<path d="M280 688v8 M276 692h8" stroke="#777" stroke-width="1.4"/>
<rect x="819" y="687" width="2" height="2" fill="#b0b0b0" />
<rect x="819" y="691" width="2" height="2" fill="#b0b0b0" />
<rect x="819" y="695" width="2" height="2" fill="#b0b0b0" />
<rect x="836.5" y="685.5" width="14" height="14" fill="#fff" stroke="#b4b4b4"/>
<path d="M845 689v7l-4-3.5z" fill="#666"/>
<rect x="851" y="686" width="479" height="14" fill="#dcdcdc" />
<rect x="851.5" y="685.5" width="454" height="14" fill="#fff" stroke="#b4b4b4"/>
<rect x="1330.5" y="685.5" width="14" height="14" fill="#fff" stroke="#b4b4b4"/>
<path d="M1335.5 689v7l4-3.5z" fill="#666"/>
<rect x="0" y="706" width="1366" height="22" fill="#f3f3f3" />
<rect x="0" y="706" width="1366" height="1" fill="#d4d4d4" />
<text x="8" y="722" font-size="12.5" fill="#262626" font-weight="normal" textLength="33.5" lengthAdjust="spacingAndGlyphs" font-family="Liberation Sans" >Pronto</text>
<rect x="63.5" y="713" width="11" height="9" fill="#fff" />
<circle cx="64.9" cy="712.9" r="2.8" fill="#5a5a5a"/>
<rect x="69" y="711.2" width="6" height="2.5" fill="#5a5a5a" />
<rect x="73.7" y="711.2" width="1.3" height="11.8" fill="#5a5a5a" />
<rect x="63" y="721.7" width="12" height="1.3" fill="#5a5a5a" />
<rect x="63" y="717" width="1.3" height="6" fill="#5a5a5a" />
<rect x="68.2" y="716" width="1.8" height="1.1" fill="#5a5a5a" />
<rect x="71.2" y="716" width="1.8" height="1.1" fill="#5a5a5a" />
<rect x="65.2" y="718" width="1.8" height="1.1" fill="#5a5a5a" />
<rect x="68.2" y="718" width="1.8" height="1.1" fill="#5a5a5a" />
<rect x="71.2" y="718" width="1.8" height="1.1" fill="#5a5a5a" />
<rect x="65.2" y="720" width="1.8" height="1.1" fill="#5a5a5a" />
<rect x="68.2" y="720" width="1.8" height="1.1" fill="#5a5a5a" />
<rect x="71.2" y="720" width="1.8" height="1.1" fill="#5a5a5a" />
<rect x="1066" y="707" width="40" height="21" fill="#c6c6c6" />
<rect x="1079.75" y="710.75" width="11.5" height="11.5" fill="#e0e0e0" stroke="#666" stroke-width="1.5"/>
<path d="M1079 714.75h13 M1079 718.25h13 M1083.75 710v13 M1087.25 710v13" stroke="#666" stroke-width="1.5"/>
<rect x="1119.75" y="710.75" width="12.5" height="11.5" fill="none" stroke="#666" stroke-width="1.5"/>
<rect x="1122.75" y="712.75" width="6.5" height="7.5" fill="none" stroke="#666" stroke-width="1.5"/>
<path d="M1124.5 714.5h3 M1124.5 716.5h3 M1124.5 718.5h3" stroke="#666" stroke-width="1"/>
<rect x="1159.75" y="710.75" width="12.5" height="11.5" fill="none" stroke="#666" stroke-width="1.5"/>
<path d="M1160 717.25h7.25v-6.5 M1163.75 711v6" fill="none" stroke="#666" stroke-width="1.5"/>
<rect x="1192" y="716" width="9" height="1" fill="#444" />
<rect x="1205" y="717" width="101" height="1" fill="#a6a6a6" />
<rect x="1253" y="712" width="5" height="11" fill="#666" />
<path d="M1310 717.5h8 M1314 713v9" stroke="#444" stroke-width="1.1"/>
<text x="1332" y="721" font-size="12" fill="#262626" font-weight="normal" textLength="25.5" lengthAdjust="spacingAndGlyphs" font-family="Liberation Sans" >100%</text>
<defs><linearGradient id="tb" x1="0" x2="1366" y1="0" y2="0" gradientUnits="userSpaceOnUse">
<stop offset="0" stop-color="#26201b"/><stop offset="0.29" stop-color="#2c2620"/>
<stop offset="0.325" stop-color="#1e282c"/><stop offset="0.38" stop-color="#1e292d"/>
<stop offset="0.43" stop-color="#2e2a24"/><stop offset="0.46" stop-color="#3a3126"/>
<stop offset="0.70" stop-color="#3b3025"/><stop offset="0.74" stop-color="#392421"/>
<stop offset="0.80" stop-color="#2e201f"/><stop offset="0.90" stop-color="#231d1c"/>
<stop offset="1" stop-color="#1f1c1b"/></linearGradient></defs>
<rect x="0" y="728" width="1366" height="40" fill="url(#tb)" />
<path d="M16 742.5L22 741.7V747.3H16z M23 741.5L32.2 740V747.3H23z M16 748.3H22V754.4L16 753.7z M23 748.3H32.2V756.2L23 754.6z" fill="#fff"/>
<rect x="48" y="728" width="344" height="40" fill="#f0f0f0" />
<rect x="48" y="728" width="344" height="1" fill="#d6d6d6" />
<rect x="48" y="767" width="344" height="1" fill="#bcbcbc" />
<circle cx="70.5" cy="745.3" r="5.2" fill="none" stroke="#111" stroke-width="1.2"/>
<path d="M66.8 749l-6.6 6.6" stroke="#111" stroke-width="1.3"/>
<text x="89" y="754" font-size="15.5" fill="#222" font-weight="normal" textLength="174.5" lengthAdjust="spacingAndGlyphs" font-family="Liberation Sans" >Digite aqui para pesquisar</text>
<circle cx="416" cy="748" r="7" fill="none" stroke="#fff" stroke-width="2"/>
<path d="M456.5 740v2.5h11v-2.5 M456.5 756v-2.5h11v2.5" fill="none" stroke="#fff" stroke-width="1.2"/>
<rect x="457.5" y="744.5" width="9" height="7" fill="none" stroke="#fff" stroke-width="1.2"/>
<path d="M471 740v16" stroke="#fff" stroke-width="1.2"/>
<rect x="469" y="746" width="4" height="4" fill="#fff" />
<path d="M509.8 747.7L500.10 742.10A11.2 11.2 0 0 1 519.50 742.10z" fill="#db4437"/>
<path d="M509.8 747.7L519.50 742.10A11.2 11.2 0 0 1 509.80 758.90z" fill="#fcc934"/>
<path d="M509.8 747.7L509.80 758.90A11.2 11.2 0 0 1 500.10 742.10z" fill="#1e8e3e"/>
<circle cx="509.8" cy="747.7" r="5.2" fill="#fff"/><circle cx="509.8" cy="747.7" r="4.1" fill="#4a8af4"/>
<defs><linearGradient id="ffg" x1="0.8" y1="0" x2="0.2" y2="1"><stop offset="0" stop-color="#ffe14a"/><stop offset="0.45" stop-color="#ff8a2a"/><stop offset="1" stop-color="#f0246b"/></linearGradient><linearGradient id="edg" x1="0" y1="0" x2="1" y2="0.3"><stop offset="0" stop-color="#2aa0ea"/><stop offset="1" stop-color="#5dd86a"/></linearGradient></defs>
<path d="M538 744c0-3 1.5-5 3-6.5l0.5 3 2-3.5c1 1 1 2 2 2.5 1.5-0.5 3-0.5 4.5 0 1-2.5 2.5-4 4-5.5 0.5 2 2 3.5 3.5 4.5 1 0.5 1.5 1 2 2.5 0.7 2 1 3.5 1 6a11 11 0 0 1 -22.5 0z" fill="url(#ffg)"/>
<circle cx="549" cy="747.5" r="5.2" fill="#7d3fe0"/>
<path d="M548 742.5c2-1 4-0.5 5 0.5-1.5 0-3 0.5-3.5 1z" fill="#c139e6"/>
<path d="M541 745.5c2-1.5 4.5-1.5 6-0.5-1 1-1.5 2-1 3.5-2 0-3.5-1.5-5-3z" fill="#ff9a2e"/>
<circle cx="587.8" cy="747.7" r="12" fill="url(#edg)"/>
<path d="M575.8 747c0.5-5 6-8.5 11-7.5 4 1 6 4 6.5 6.5-1-2-3-3-5-3-3 0-5 2.5-4.5 5.5 0.5 4 5 7 10 6.5 1.5 0 2.5-0.5 3.5-1-2 4.5-6.5 6.5-10.5 6.5-6 0-11-5-11-13z" fill="#1565c8"/>
<path d="M576.3 746c1-3.5 4-6 8-6.5-3 1.5-5 4-5.5 7.5-0.5 5 2 9.5 6.5 12.5-5-0.5-9-5-9-13.5z" fill="#0f4fa8" opacity="0.8"/>
<ellipse cx="589.3" cy="748" rx="2.8" ry="2.2" fill="#2a2620"/>
<path d="M616 739h9l1 1.5h11.5v15.5h-21.5z" fill="#e8a80c"/>
<rect x="616" y="742" width="21.5" height="14" fill="#ffd35c" />
<path d="M620 757v-6.5a1 1 0 0 1 1-1h12a1 1 0 0 1 1 1v6.5h-4v-4h-6v4z" fill="#3b8fdc"/>
<path d="M659 742.5v-5a1 1 0 0 1 1-1h10.5a1 1 0 0 1 1 1v5" fill="none" stroke="#f0f0f0" stroke-width="2"/>
<rect x="653" y="742" width="23" height="18" fill="#f3f3f3" />
<rect x="653" y="742" width="23" height="2" fill="#d8d8d8" />
<rect x="660" y="747" width="4" height="4" fill="#f25022" />
<rect x="665" y="747" width="4" height="4" fill="#7fba00" />
<rect x="660" y="752" width="4" height="4" fill="#00a4ef" />
<rect x="665" y="752" width="4" height="4" fill="#ffb900" />
<path d="M690 743l12.5-7 12.5 7v16h-25z" fill="#1f8fe0"/>
<path d="M690 743h25l-12.5 8z" fill="#ffffff" opacity="0.85"/>
<path d="M690 759l12.5-9 12.5 9z" fill="#45b3f5"/>
<rect x="729" y="736" width="24" height="24" rx="1.5" fill="#0e6fd8"/>
<circle cx="741" cy="748" r="9.8" fill="#fff"/>
<path d="M733 748l4.5-4v2.5h7v-2.5l4.5 4-4.5 4v-2.5h-7v2.5z" fill="#0e6fd8"/>
<circle cx="779" cy="748" r="10.5" fill="#12a5e2"/>
<circle cx="772.5" cy="741.5" r="4.5" fill="#12a5e2"/><circle cx="785.5" cy="754.5" r="4.5" fill="#12a5e2"/>
<path d="M782.5 743.2c-1-0.8-2.2-1.2-3.6-1.2-2.2 0-3.6 1.1-3.6 2.6 0 3.6 7.5 2.2 7.5 6.3 0 1.8-1.6 3-4 3-1.5 0-2.9-0.5-3.9-1.3" fill="none" stroke="#fff" stroke-width="2.1"/>
<defs><linearGradient id="npg" x1="0" y1="0.6" x2="1" y2="0.3"><stop offset="0" stop-color="#4f8c98"/><stop offset="0.5" stop-color="#b9dbe2"/><stop offset="1" stop-color="#f2f8fa"/></linearGradient></defs>
<path d="M815 737.5l11 3.5-4 17.5-17-5z" fill="url(#npg)"/>
<path d="M826 741l1 0.5-4 16.5-1 0.5z" fill="#c9a24a"/>
<path d="M815 737.5l11 3.5" stroke="#6d8f96" stroke-width="1.2"/>
<rect x="850" y="737" width="16" height="21" fill="#0a5fc0" />
<rect x="850" y="737" width="8" height="5" fill="#0a64c8" />
<rect x="858" y="737" width="8" height="5" fill="#28a8ea" />
<rect x="858" y="742" width="8" height="5" fill="#1490df" />
<rect x="850" y="742" width="8" height="5" fill="#0078d4" />
<path d="M850 747l8 5 8-5v11h-16z" fill="#1f8fe8"/>
<path d="M850 758l8-6 8 6z" fill="#2aa4f4"/>
<rect x="843" y="742" width="12" height="12" fill="#0a62c2" />
<ellipse cx="849" cy="748" rx="3" ry="3.3" fill="none" stroke="#fff" stroke-width="1.5"/>
<rect x="881" y="736" width="24" height="24" rx="2.5" fill="#ee8522"/>
<path d="M899.72 745.32 L900.08 747.14 L897.90 747.91 L897.57 749.57 L899.29 751.12 L898.26 752.66 L896.17 751.67 L894.76 752.60 L894.88 754.92 L893.06 755.28 L892.29 753.10 L890.63 752.77 L889.08 754.49 L887.54 753.46 L888.53 751.37 L887.60 749.96 L885.28 750.08 L884.92 748.26 L887.10 747.49 L887.43 745.83 L885.71 744.28 L886.74 742.74 L888.83 743.73 L890.24 742.80 L890.12 740.48 L891.94 740.12 L892.71 742.30 L894.37 742.63 L895.92 740.91 L897.46 741.94 L896.47 744.03 L897.40 745.44z" fill="#fff"/>
<circle cx="892.5" cy="747.7" r="2.6" fill="#ee8522"/>
<rect x="919" y="736" width="24" height="24" rx="2.5" fill="#ee8522"/>
<path d="M924.2 753.6v-8.2l6.8-5.6 6.8 5.6v8.2z" fill="none" stroke="#fff" stroke-width="1.8"/>
<rect x="951" y="728" width="34" height="40" fill="#5d5248" />
<rect x="985" y="728" width="1" height="40" fill="#6a5e54" />
<rect x="961" y="737" width="18" height="21" fill="#21a366" />
<rect x="961" y="737" width="18" height="7" fill="#33c481" />
<rect x="961" y="751" width="18" height="7" fill="#107c41" />
<rect x="955" y="742" width="12" height="12" fill="#185c37" />
<path d="M958 744.5l6 7 M964 744.5l-6 7" stroke="#fff" stroke-width="1.6"/>
<rect x="612" y="766" width="31" height="2" fill="#8ee8f0" />
<rect x="765" y="766" width="30" height="2" fill="#8ee8f0" />
<rect x="803" y="766" width="30" height="2" fill="#8ee8f0" />
<rect x="841" y="766" width="30" height="2" fill="#8ee8f0" />
<rect x="879" y="766" width="30" height="2" fill="#8ee8f0" />
<rect x="917" y="766" width="30" height="2" fill="#8ee8f0" />
<rect x="951" y="766" width="35" height="2" fill="#8ee8f0" />
<defs><linearGradient id="wcg" x1="0" y1="0" x2="0" y2="1"><stop offset="0" stop-color="#cfe6f8"/><stop offset="1" stop-color="#9fcbef"/></linearGradient></defs>
<path d="M1019.5 752.5a3.6 3.6 0 0 1 -0.5-7.2 5.6 5.6 0 0 1 10.8-1.6 4.4 4.4 0 0 1 2.2 8.8z" fill="url(#wcg)"/>
<path d="M1025 749.5c-1.3 1.8-2 2.8-2 3.8a2 2 0 0 0 4 0c0-1-0.7-2-2-3.8z" fill="#3a8ee6"/>
<text x="1047" y="754" font-size="14" fill="#fff" font-weight="normal" textLength="28.5" lengthAdjust="spacingAndGlyphs" font-family="Liberation Sans" >14°C</text>
<path d="M1092.5 751l6-6 6 6" fill="none" stroke="#fff" stroke-width="1.2"/>
<path d="M1122.5 745.5h8v8h-8 M1131.5 747.5v4" fill="none" stroke="#fff" stroke-width="1.1"/>
<path d="M1116.5 744v2.5 M1118.5 744v2.5 M1115.5 746.5h4v2a2 2 0 0 1 -4 0z M1117.5 750.5v3h5" fill="none" stroke="#fff" stroke-width="1"/>
<path d="M1143.5 742.5h11v10h-15.5v-4 M1146.5 753v2.5 M1142 755.5h9" fill="none" stroke="#fff" stroke-width="1.1"/>
<rect x="1139.5" y="742.5" width="3.5" height="4" fill="none" stroke="#fff" stroke-width="1"/>
<path d="M1164 746h3l4-3.5v12l-4-3.5h-3z M1173.5 745.5c1.5 2 1.5 4.5 0 6.5 M1176 743.5c2.5 3 2.5 7.5 0 10.5" fill="none" stroke="#fff" stroke-width="1.1"/>
<path d="M1189 753a3.5 3.5 0 0 1 0-7 5 5 0 0 1 9.5-1 3.5 3.5 0 0 1 1.5 8z" fill="#fff"/>
<path d="M1195 752v-5 M1192.5 749l2.5-2.5 2.5 2.5" stroke="#2e2424" stroke-width="1.3" fill="none"/>
<text x="1214" y="744" font-size="12.5" fill="#fff" font-weight="normal" textLength="22.5" lengthAdjust="spacingAndGlyphs" font-family="Liberation Sans" >POR</text>
<text x="1213" y="761" font-size="12.5" fill="#fff" font-weight="normal" textLength="25.5" lengthAdjust="spacingAndGlyphs" font-family="Liberation Sans" >PTB2</text>
<text x="1265" y="743" font-size="12.5" fill="#fff" font-weight="normal" textLength="26.5" lengthAdjust="spacingAndGlyphs" font-family="Liberation Sans" >13:29</text>
<text x="1250" y="761" font-size="12.5" fill="#fff" font-weight="normal" textLength="56.5" lengthAdjust="spacingAndGlyphs" font-family="Liberation Sans" >13/08/2021</text>
<path d="M1325.5 740.5h15v12h-6l-1.8 2.3-1.8-2.3h-5.4z" fill="none" stroke="#fff" stroke-width="1.1"/>
<rect x="1361" y="728" width="1" height="40" fill="#5a5550" />
</svg></body></html>
